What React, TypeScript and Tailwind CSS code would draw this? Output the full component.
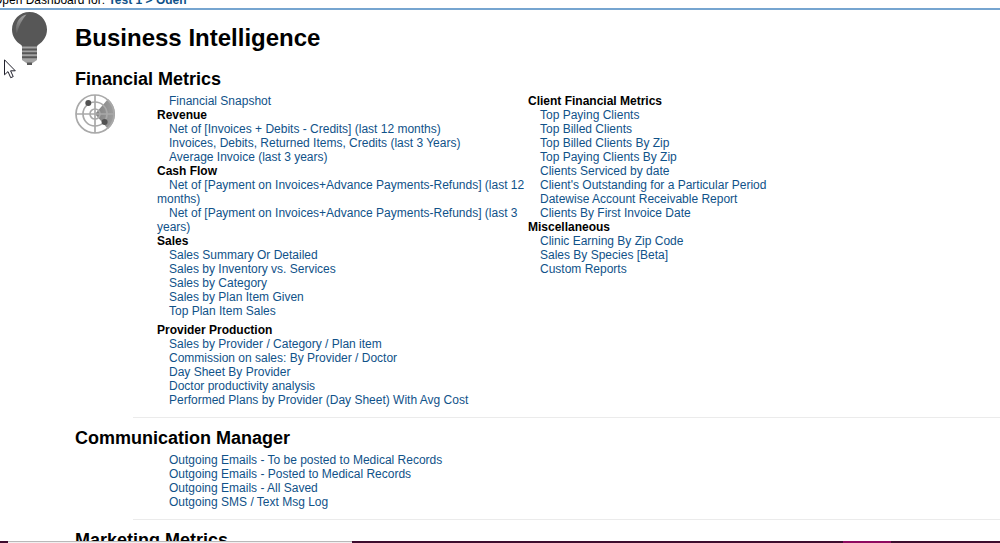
import React from 'react';

// Interfaces
interface LinkGroup {
  title?: string;
  links: string[];
  spaced?: boolean;
}

interface SectionProps {
  title: string;
  icon?: React.ReactNode;
  columns: LinkGroup[][];
}

const financialColumns: LinkGroup[][] = [
  [
    { links: ['Financial Snapshot'] },
    {
      title: 'Revenue',
      links: [
        'Net of [Invoices + Debits - Credits] (last 12 months)',
        'Invoices, Debits, Returned Items, Credits (last 3 Years)',
        'Average Invoice (last 3 years)',
      ],
    },
    {
      title: 'Cash Flow',
      links: [
        'Net of [Payment on Invoices+Advance Payments-Refunds] (last 12 months)',
        'Net of [Payment on Invoices+Advance Payments-Refunds] (last 3 years)',
      ],
    },
    {
      title: 'Sales',
      links: [
        'Sales Summary Or Detailed',
        'Sales by Inventory vs. Services',
        'Sales by Category',
        'Sales by Plan Item Given',
        'Top Plan Item Sales',
      ],
    },
    {
      title: 'Provider Production',
      spaced: true,
      links: [
        'Sales by Provider / Category / Plan item',
        'Commission on sales: By Provider / Doctor',
        'Day Sheet By Provider',
        'Doctor productivity analysis',
        'Performed Plans by Provider (Day Sheet) With Avg Cost',
      ],
    },
  ],
  [
    {
      title: 'Client Financial Metrics',
      links: [
        'Top Paying Clients',
        'Top Billed Clients',
        'Top Billed Clients By Zip',
        'Top Paying Clients By Zip',
        'Clients Serviced by date',
        "Client's Outstanding for a Particular Period",
        'Datewise Account Receivable Report',
        'Clients By First Invoice Date',
      ],
    },
    {
      title: 'Miscellaneous',
      links: ['Clinic Earning By Zip Code', 'Sales By Species [Beta]', 'Custom Reports'],
    },
  ],
];

const communicationColumns: LinkGroup[][] = [
  [
    {
      links: [
        'Outgoing Emails - To be posted to Medical Records',
        'Outgoing Emails - Posted to Medical Records',
        'Outgoing Emails - All Saved',
        'Outgoing SMS / Text Msg Log',
      ],
    },
  ],
];

// Icons
const BulbIcon: React.FC = () => (
  <svg className="block" width="36" height="54" viewBox="0 0 36 54" aria-hidden="true">
    <defs>
      <linearGradient id="shine" x1="0" y1="0" x2="0" y2="1">
        <stop offset="0" stopColor="#a0a0a0" />
        <stop offset="1" stopColor="#606060" />
      </linearGradient>
    </defs>
    <path
      d="M17.500 0C7.800 0 0 7.800 0 17.500C0 24.500 4 29.500 8.500 32.500C9.800 33.300 10 34 10 35H25C25 34 25.500 33.300 26.700 32.500C31 29.500 35 24.500 35 17.500C35 7.800 27.200 0 17.500 0Z"
      fill="#575757"
    />
    <path d="M14.500 2.500C7.500 4 3.200 10.500 4 20C4.100 21.500 5 21 5.500 19.500C7 13 10 8 14.500 2.500Z" fill="url(#shine)" />
    <path d="M10 34.500h15v13.500l-5 3.500h-5l-5-3.500z" fill="#a3a3a3" />
    <path d="M10 36.500h15v2H10zM10 40.300h15v2H10zM10 44.200h15v2H10z" fill="#575757" />
    <path d="M15 50.500h5v2.500h-5z" fill="#575757" />
  </svg>
);

const RadarIcon: React.FC = () => (
  <svg className="block" width="40" height="40" viewBox="0 0 40 40" aria-hidden="true">
    <defs>
      <linearGradient id="sweep" x1="0" y1="0" x2="1" y2="0">
        <stop offset="0" stopColor="#808080" />
        <stop offset="1" stopColor="#a0a0a0" />
      </linearGradient>
    </defs>
    <path d="M20 20L33 5A19.500 19.500 0 0 1 33 35Z" fill="url(#sweep)" />
    <g fill="none" stroke="#a9a9a9" strokeWidth="1.700">
      <circle cx="20" cy="20" r="19" />
      <circle cx="20" cy="20" r="12" />
      <circle cx="20" cy="20" r="5" />
      <path d="M20 1V39M1 20H39" />
    </g>
    <circle cx="13.300" cy="9" r="3" fill="#525252" />
    <circle cx="29.600" cy="28" r="3" fill="#525252" />
  </svg>
);

const PointerIcon: React.FC = () => (
  <svg className="absolute left-1 top-[59px]" width="12" height="20" viewBox="0 0 12 20" aria-hidden="true">
    <path
      d="M0.500 0.800V15.800L4 12.600L6.700 18.700L9.200 17.600L6.600 11.800H11.300Z"
      fill="#ffffff"
      stroke="#20202c"
      strokeWidth="1"
    />
  </svg>
);

const Group: React.FC<{ group: LinkGroup }> = ({ group }) => (
  <div className={group.spaced ? 'pt-[5px]' : ''}>
    {group.title && <h3 className="font-bold">{group.title}</h3>}
    {group.links.map((label) => (
      <a key={label} href="#" className="block indent-3 text-[#105289] hover:underline">
        {label}
      </a>
    ))}
  </div>
);

const Section: React.FC<SectionProps> = ({ title, icon, columns }) => (
  <section>
    <h2 className="text-lg leading-5 font-bold">{title}</h2>
    <div className="flex pt-[5px]">
      <div className="w-[82px] shrink-0">{icon}</div>
      {columns.map((groups, index) => (
        <div key={index} className="w-[371px]">
          {groups.map((group, i) => (
            <Group key={i} group={group} />
          ))}
        </div>
      ))}
    </div>
    <hr className="mt-[10px] mb-[10px] ml-[58px] border-[#ebebeb]" />
  </section>
);

export default function App() {
  return (
    <div className="relative flex h-screen flex-col overflow-hidden bg-white font-['Liberation_Sans',Arial,sans-serif] text-xs leading-[14px] text-black">
      <header className="flex h-[10px] shrink-0 items-end overflow-hidden border-b-2 border-[#76a5d0] pb-px">
        <p className="-ml-[7px] whitespace-nowrap">
          Open Dashboard for:{' '}
          <a href="#" className="font-bold text-[#105289]">
            Test 1 &gt; Oden
          </a>
        </p>
      </header>

      <main className="flex min-h-0 flex-1 overflow-hidden">
        <div className="w-[75px] shrink-0 pt-0.5 pl-3">
          <BulbIcon />
        </div>
        <div className="min-w-0 flex-1 pt-[14px]">
          <h1 className="pb-[17px] text-2xl leading-7 font-bold">Business Intelligence</h1>
          <Section title="Financial Metrics" icon={<RadarIcon />} columns={financialColumns} />
          <Section title="Communication Manager" columns={communicationColumns} />
          <h2 className="text-lg leading-5 font-bold">Marketing Metrics</h2>
        </div>
      </main>

      <footer className="flex h-0.5 shrink-0 bg-[#3d0c2e]">
        <div className="ml-2 w-[344px] border-t border-[#b9b9b9] bg-[#f0f0f0]" />
        <div className="ml-auto mr-[109px] w-12 bg-[#8e0a60]" />
      </footer>

      <PointerIcon />
    </div>
  );
}
